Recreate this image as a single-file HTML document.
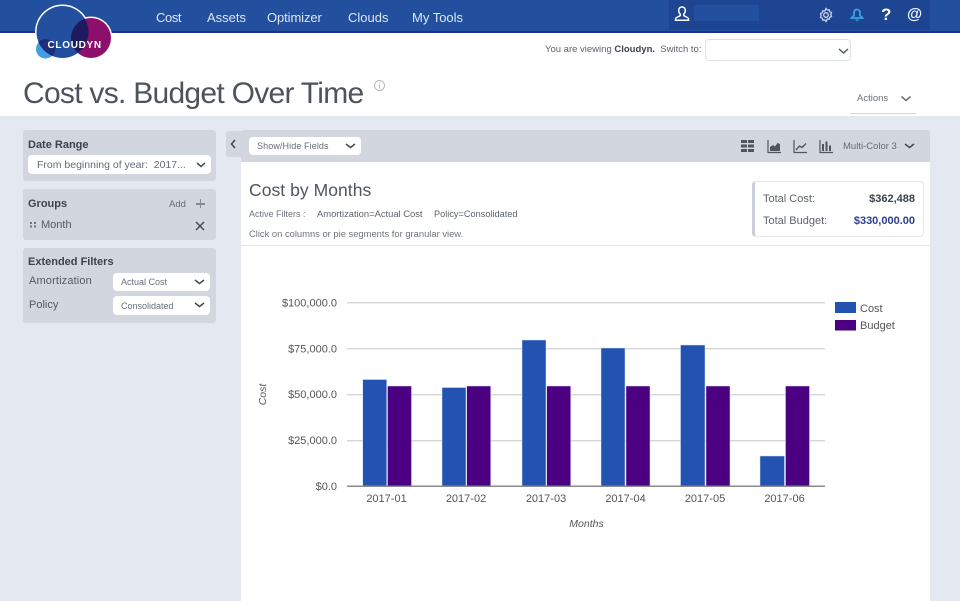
<!DOCTYPE html>
<html><head><meta charset="utf-8"><style>
html,body{margin:0;padding:0;width:960px;height:601px;overflow:hidden;background:#e3e8f1;font-family:"Liberation Sans",sans-serif;color:#555b63}
.a{position:absolute;white-space:nowrap}
.panel{position:absolute;left:23px;width:193px;background:#d2d7df;border-radius:3px}
.sel{position:absolute;background:#fff;border-radius:4px}
.b{font-weight:bold;color:#3c434b;font-size:11px}
#wrap{position:absolute;left:0;top:0;width:960px;height:601px;filter:blur(.35px)}
</style></head><body><div id="wrap">
<div class="a" style="left:0;top:0;width:960px;height:116px;background:#fff"></div>
<div class="a" style="left:0;top:0;width:960px;height:31px;background:#22509f"></div>
<div class="a" style="left:0;top:31px;width:960px;height:2px;background:#1a2f8f"></div>
<div class="a" style="left:669px;top:0;width:261px;height:30px;background:#1e4592"></div>
<div class="a" style="left:694px;top:5px;width:65px;height:16px;background:#22509f"></div>

<svg class="a" style="left:0;top:0" width="130" height="66" viewBox="0 0 130 66">
<circle cx="91" cy="38" r="21.5" fill="#fff"/>
<circle cx="62.5" cy="32" r="27.5" fill="#fff"/>
<circle cx="45.500" cy="49" r="9.500" fill="#3f9fe0"/>
<circle cx="62.500" cy="32" r="26" fill="#22509f"/>
<circle cx="91" cy="38" r="20" fill="#8c0f6c"/>
<clipPath id="c1"><circle cx="62.500" cy="32" r="26"/></clipPath>
<circle cx="91" cy="38" r="20" fill="#1d1b5e" clip-path="url(#c1)"/>
<circle cx="45.500" cy="49" r="10" fill="#1d2f7c" clip-path="url(#c1)"/>
<text x="47.500" y="48" font-family="Liberation Sans" font-weight="bold" font-size="10" letter-spacing=".7" fill="#fff">CLOUDYN</text>
</svg>

<div class="a" style="left:156px;top:10px;font-size:13px;color:#dfe6f3;letter-spacing:-.4px">Cost</div>
<div class="a" style="left:207px;top:10px;font-size:13px;color:#dfe6f3">Assets</div>
<div class="a" style="left:267px;top:10px;font-size:13px;color:#dfe6f3;letter-spacing:-.1px">Optimizer</div>
<div class="a" style="left:348px;top:10px;font-size:13px;color:#dfe6f3">Clouds</div>
<div class="a" style="left:412px;top:10px;font-size:13px;color:#dfe6f3">My Tools</div>

<svg class="a" style="left:672px;top:5px" width="20" height="20" viewBox="0 0 20 20" fill="none" stroke="#fff" stroke-width="1.500"><path d="M10 2c-2.500 0-3.500 2-3.300 4 .1 1.500.8 2.500 1.600 3.200v1.300c-.8 1-4.500 1.700-4.800 3.300v1.400h13v-1.400c-.3-1.600-4-2.300-4.800-3.300V9.200c.8-.7 1.500-1.700 1.600-3.200C13.500 4 12.500 2 10 2z"/></svg>
<svg class="a" style="left:818px;top:7px" width="16" height="16" viewBox="0 0 16 16" fill="none" stroke="#c9d3e6" stroke-width="1.300"><path d="M8 1.500l1.200 1.500 2-.2.5 1.900 1.800.9-.7 1.900.7 1.900-1.800.9-.5 1.900-2-.2L8 14.500l-1.200-1.500-2 .2-.5-1.900-1.800-.9.7-1.900-.7-1.900 1.800-.9.5-1.900 2 .2z"/><circle cx="8" cy="8" r="2.300"/></svg>
<svg class="a" style="left:850px;top:7px" width="14" height="16" viewBox="0 0 14 16"><path d="M7 2.500c-2.200 0-3 1.500-3 3.500v2.500L1.500 11h11L10 8.500V6c0-2-.8-3.500-3-3.500z" fill="none" stroke="#3b9fe6" stroke-width="1.800"/><path d="M4.500 12.500h5l-2.500 1.800z" fill="#3b9fe6"/></svg>
<div class="a" style="left:881px;top:5px;font-size:17px;font-weight:bold;color:#fff">?</div>
<div class="a" style="left:907px;top:6px;font-size:15.500px;font-weight:bold;color:#f0f4fa">@</div>

<div class="a" style="left:545px;top:44px;font-size:9.500px;color:#5e646c">You are viewing <b style="color:#3c434b">Cloudyn.</b>&nbsp; Switch to:</div>
<div class="a" style="left:705px;top:39px;width:144px;height:20px;background:#fff;border:1px solid #dde1e7;border-radius:4px"></div>
<svg class="a" style="left:838px;top:48px" width="11" height="7" viewBox="0 0 11 7" fill="none" stroke="#555b63" stroke-width="1.500"><path d="M1 1l4.500 4L10 1"/></svg>

<div class="a" style="left:23px;top:77px;font-size:30px;color:#4c535c;letter-spacing:-.72px;font-weight:normal">Cost vs. Budget Over Time</div>
<svg class="a" style="left:373px;top:79px" width="13" height="13" viewBox="0 0 13 13"><circle cx="6.500" cy="6.500" r="5" fill="none" stroke="#b7bcc4"/><path d="M6.500 5.500v4M6.500 3.500v1" stroke="#b7bcc4"/></svg>

<div class="a" style="left:857px;top:93px;font-size:9.500px;color:#6a7078">Actions</div>
<svg class="a" style="left:901px;top:96px" width="10" height="6" viewBox="0 0 10 6" fill="none" stroke="#555b63" stroke-width="1.300"><path d="M.5.500l4.500 4 4.500-4"/></svg>
<div class="a" style="left:850px;top:113px;width:66px;height:1px;background:#d4d8de"></div>

<div class="panel" style="top:130px;height:51px"></div>
<div class="a b" style="left:28px;top:139px">Date Range</div>
<div class="sel" style="left:28px;top:155px;width:183px;height:19px"></div>
<div class="a" style="left:37px;top:158.500px;font-size:10.500px;color:#666c74">From beginning of year:&nbsp; 2017...</div>
<svg class="a" style="left:196px;top:162px" width="10" height="6" viewBox="0 0 10 6" fill="none" stroke="#444a52" stroke-width="1.500"><path d="M1 1l4 3.500L9 1"/></svg>

<div class="panel" style="top:189px;height:51px"></div>
<div class="a b" style="left:28px;top:198px">Groups</div>
<div class="a" style="left:169px;top:199px;font-size:9.500px;color:#666c74">Add</div>
<div class="a" style="left:196px;top:203px;width:9px;height:1.500px;background:#858b93"></div>
<div class="a" style="left:199.800px;top:199px;width:1.500px;height:9px;background:#858b93"></div>
<svg class="a" style="left:29px;top:221px" width="8" height="7"><path d="M1 1h2v2H1zM5 1h2v2H5zM1 4.500h2v2H1zM5 4.500h2v2H5z" fill="#70767e"/></svg>
<div class="a" style="left:41px;top:219px;font-size:11px;color:#555b63">Month</div>
<svg class="a" style="left:195px;top:221px" width="10" height="10" fill="none" stroke="#444a52" stroke-width="1.500"><path d="M1 1l8 8M9 1l-8 8"/></svg>

<div class="panel" style="top:248px;height:75px"></div>
<div class="a b" style="left:28px;top:256px">Extended Filters</div>
<div class="a" style="left:29px;top:275px;font-size:11px;color:#555b63;letter-spacing:.15px">Amortization</div>
<div class="a" style="left:29px;top:298.500px;font-size:11px;color:#555b63">Policy</div>
<div class="sel" style="left:113px;top:273px;width:97px;height:18px"></div>
<div class="sel" style="left:113px;top:296px;width:97px;height:19px"></div>
<div class="a" style="left:121px;top:277px;font-size:9px;color:#6a7078">Actual Cost</div>
<div class="a" style="left:121px;top:301px;font-size:9px;color:#6a7078">Consolidated</div>
<svg class="a" style="left:194px;top:279px" width="11" height="6" viewBox="0 0 11 6" fill="none" stroke="#444a52" stroke-width="1.500"><path d="M1 1l4.500 3.500L10 1"/></svg>
<svg class="a" style="left:194px;top:302px" width="11" height="6" viewBox="0 0 11 6" fill="none" stroke="#444a52" stroke-width="1.500"><path d="M1 1l4.500 3.500L10 1"/></svg>

<div class="a" style="left:226px;top:131px;width:20px;height:26px;background:#d2d7df;border-radius:3px"></div>
<svg class="a" style="left:230px;top:139px" width="7" height="10" fill="none" stroke="#444a52" stroke-width="1.600"><path d="M5 1L1.500 5 5 9"/></svg>
<div class="a" style="left:241px;top:130px;width:689px;height:32px;background:#d2d7df;border-radius:3px 3px 0 0"></div>
<div class="a" style="left:241px;top:162px;width:689px;height:439px;background:#fff"></div>
<div class="sel" style="left:249px;top:137px;width:112px;height:18px"></div>
<div class="a" style="left:257px;top:141px;font-size:9px;color:#666c74;letter-spacing:.1px">Show/Hide Fields</div>
<svg class="a" style="left:345px;top:143px" width="11" height="6" viewBox="0 0 11 6" fill="none" stroke="#444a52" stroke-width="1.500"><path d="M1 1l4.500 3.500L10 1"/></svg>

<svg class="a" style="left:740px;top:139px" width="100" height="16" viewBox="0 0 100 16" fill="#50565e">
<path d="M1 1h6v3H1zM8 1h6v3H8zM1 5.500h6v3H1zM8 5.500h6v3H8zM1 10h6v3H1zM8 10h6v3H8z"/>
<path d="M28 1v12.500h13" fill="none" stroke="#50565e" stroke-width="1.200"/><path d="M30 12V8l3-2 2 1.500 2.500-3.500 2.500 1v7z"/>
<path d="M54 1v12.500h13" fill="none" stroke="#50565e" stroke-width="1.200"/><path d="M56 11l3.500-4 2.500 1.500 4-4" fill="none" stroke="#50565e" stroke-width="1.400"/>
<path d="M80 1v12.500h13" fill="none" stroke="#50565e" stroke-width="1.200"/><path d="M82 5h2v7h-2zM85.500 2.500h2V12h-2zM89 6.500h2V12h-2z"/>
</svg>
<div class="a" style="left:843px;top:141px;font-size:9.500px;color:#666c74">Multi-Color 3</div>
<svg class="a" style="left:904px;top:143px" width="11" height="6" viewBox="0 0 11 6" fill="none" stroke="#444a52" stroke-width="1.500"><path d="M1 1l4.500 3.500L10 1"/></svg>

<div class="a" style="left:249px;top:180px;font-size:17.500px;color:#4f565e;letter-spacing:.05px">Cost by Months</div>
<div class="a" style="left:249px;top:208px;line-height:12px;font-size:9px;color:#6e747c">Active Filters :</div>
<div class="a" style="left:317px;top:208px;line-height:12px;font-size:9.400px;color:#5e646c">Amortization=Actual Cost</div>
<div class="a" style="left:434px;top:208px;line-height:12px;font-size:9.200px;color:#5e646c">Policy=Consolidated</div>
<div class="a" style="left:249px;top:228px;font-size:9.400px;color:#6e747c">Click on columns or pie segments for granular view.</div>
<div class="a" style="left:241px;top:245px;width:689px;height:1px;background:#e4e7ec"></div>

<div class="a" style="left:752px;top:181px;width:168px;height:54px;background:#fff;border:1px solid #e3e6eb;border-left:3px solid #c9d0da;border-radius:4px"></div>
<div class="a" style="left:763px;top:193px;font-size:11px;color:#5e646c">Total Cost:</div>
<div class="a" style="left:763px;top:215px;font-size:11px;color:#5e646c">Total Budget:</div>
<div class="a" style="right:45px;top:193px;font-size:11px;font-weight:bold;color:#3c434b">$362,488</div>
<div class="a" style="right:45px;top:215px;font-size:11px;font-weight:bold;color:#2a3f94">$330,000.00</div>

<svg class="a" style="left:0;top:0" width="960" height="601" viewBox="0 0 960 601" font-family="Liberation Sans" font-size="11" fill="#555">
<g fill="#d6d6d8"><rect x="347" y="302" width="478" height="1.400"/><rect x="347" y="348" width="478" height="1.400"/><rect x="347" y="394" width="478" height="1.400"/><rect x="347" y="440" width="478" height="1.400"/></g>
<g fill="#2353b0" stroke="#dce4f5" stroke-width=".5">
<rect x="362.700" y="379.500" width="24" height="106.500"/><rect x="442" y="387.500" width="24" height="98.500"/><rect x="522" y="340" width="24" height="146"/><rect x="601" y="348" width="24" height="138"/><rect x="680.500" y="345" width="24.500" height="141"/><rect x="760" y="456" width="24.500" height="30"/>
</g>
<g fill="#4b0082" stroke="#e5dcef" stroke-width=".5">
<rect x="387.500" y="386" width="24" height="100"/><rect x="466.700" y="386" width="24" height="100"/><rect x="546.700" y="386" width="24" height="100"/><rect x="626" y="386" width="24" height="100"/><rect x="706" y="386" width="24" height="100"/><rect x="785.500" y="386" width="24" height="100"/>
</g>
<rect x="347" y="485.500" width="478" height="1.500" fill="#8a8a8a"/>
<g text-anchor="end"><text x="337" y="306.500">$100,000.0</text><text x="337" y="352.500">$75,000.0</text><text x="337" y="398">$50,000.0</text><text x="337" y="444">$25,000.0</text><text x="337" y="490">$0.0</text></g>
<g text-anchor="middle"><text x="386.500" y="502">2017-01</text><text x="466" y="502">2017-02</text><text x="546" y="502">2017-03</text><text x="625.500" y="502">2017-04</text><text x="705" y="502">2017-05</text><text x="784.500" y="502">2017-06</text></g>
<text x="586.500" y="527" text-anchor="middle" font-style="italic" font-size="10.500">Months</text>
<text transform="translate(266 394.500) rotate(-90)" text-anchor="middle" font-style="italic" font-size="10.500">Cost</text>
<rect x="835" y="302" width="21" height="11" fill="#2353b0"/><rect x="835" y="320" width="21" height="10.500" fill="#4b0082"/>
<text x="860" y="312">Cost</text><text x="860" y="329">Budget</text>
</svg>
</div></body></html>
